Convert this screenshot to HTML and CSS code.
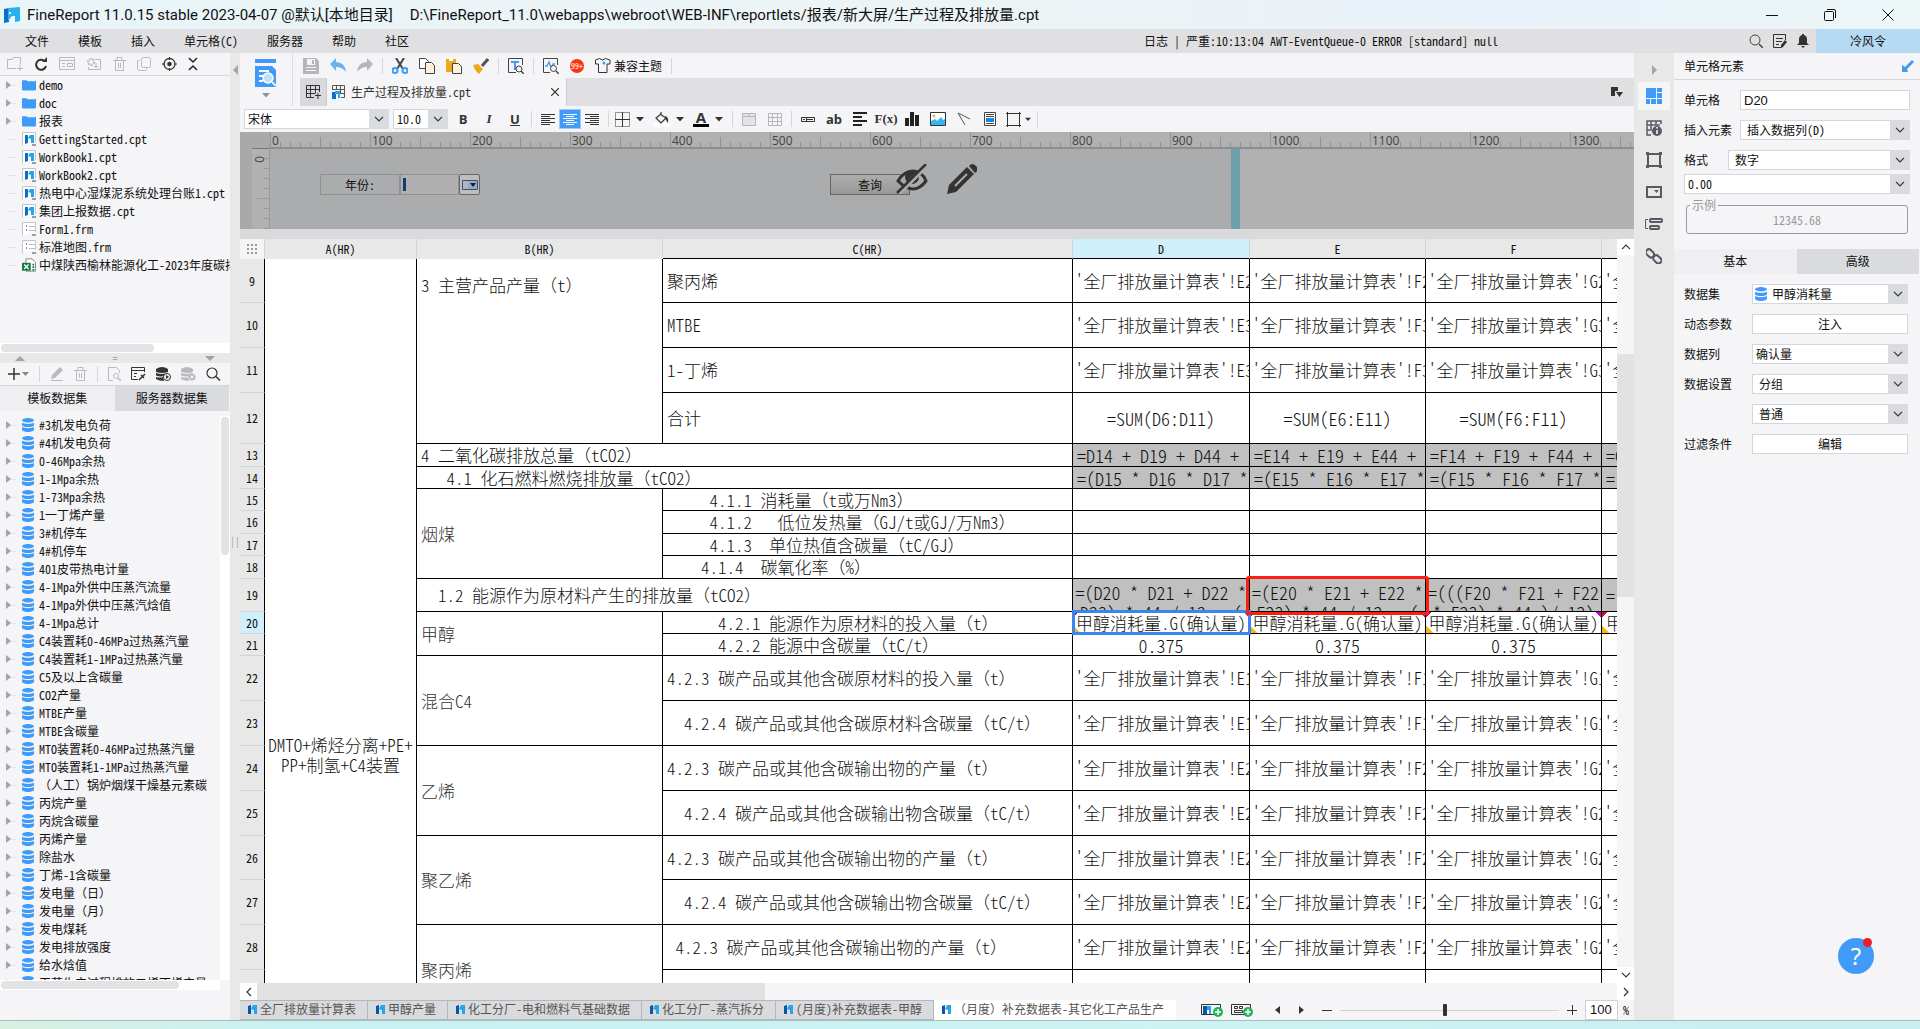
FILE: index.html
```html
<!DOCTYPE html>
<html lang="zh-CN">
<head>
<meta charset="utf-8">
<title>FineReport - 生产过程及排放量.cpt</title>
<link rel="stylesheet" href="styles.css">
</head>
<body>
<svg class="defs" aria-hidden="true">
  <symbol id="logo" viewBox="0 0 16 16"><path fill="#0b6fc9" d="M0 2l5-1v14l-5 1z"/><path fill="#27b1ee" d="M4 1l12-1v14l-5 1v-6H8l-4 5z"/><path fill="#fff" d="M5 5h2v2h-2zM9 9h1v7h-1z"/></symbol>
  <symbol id="db" viewBox="0 0 12 14"><g fill="#3f9bf7"><path d="M0 2.4C0 1 2.700 6 0s6 1 6 2.400v.6C12 4.400 9.300 5 6 5S0 4.400 0 3z"/><path d="M0 4.600C1 5.600 3.500 6 6 6s5-.4 6-1.400V7c0 1.400-2.700 2-6 2S0 8.400 0 7z"/><path d="M0 8.800C1 9.800 3.500 10.200 6 10.200s5-.4 6-1.400v2.700c0 1.500-2.700 2.500-6 2.500s-6-1-6-2.500z"/><ellipse cx="6" cy="2.200" rx="6" ry="2.200"/></g></symbol>
  <symbol id="folder" viewBox="0 0 15 12"><path fill="#3f9bf7" d="M0 1h5l1 1h8l1-1v10l-1 1H1l-1-1z"/></symbol>
  <symbol id="cpt" viewBox="0 0 14 14"><path fill="#fff" stroke="#c4c6ca" d="M.5 13.500V.5h13V10"/><path fill="#0b6fc9" d="M3 3h3v8l-3 1z"/><path fill="#27a5ea" d="M6 6l2-3h4v8H9V7z"/><path fill="#9a9da3" d="M10 12h4v2h-4z"/></symbol>
  <symbol id="frm" viewBox="0 0 14 14"><path fill="#fff" stroke="#c4c6ca" d="M.5 13.500V.5h13V10"/><path fill="#3b9be8" d="M4 3h1v2H4zM4 7h1v2H4z"/><path stroke="#b9bbc0" d="M7 4.500h6M7 8.500h6"/><path fill="#9a9da3" d="M10 12h4v2h-4z"/></symbol>
  <symbol id="xls" viewBox="0 0 16 15"><path fill="#fff" stroke="#777" d="M4.500.5h7l4 4v10h-11z"/><path fill="#107c41" d="M0 5h10v9H0z"/><path stroke="#fff" stroke-width="1.500" d="M2.500 7l5 5M7.500 7l-5 5"/><path stroke="#107c41" stroke-width="2" d="M13 6v8" stroke-dasharray="2 1"/></symbol>
  <symbol id="chev" viewBox="0 0 10 6"><path fill="none" stroke="#333" stroke-width="1.200" d="M1 .8l4 4 4-4"/></symbol>
  <symbol id="tri" viewBox="0 0 8 5"><path fill="#333" d="M0 0h8L4 4.500z"/></symbol>
  <symbol id="tab-icon" viewBox="0 0 9 9"><path fill="#0b58a8" d="M0 1l3-1v9H0z"/><path fill="#27a5ea" d="M3 4l2-4h4v9H6V5z"/></symbol>
</svg>

<header class="titlebar">
  <svg class="app-logo"><use href="#logo"/></svg>
  <span>FineReport 11.0.15 stable 2023-04-07 @默认[本地目录]</span>
  <span class="path">D:\FineReport_11.0\webapps\webroot\WEB-INF\reportlets/报表/新大屏/生产过程及排放量.cpt</span>
  <div class="window-buttons">
    <button aria-label="最小化"><svg width="12" height="12"><path stroke="#111" d="M0 6.500h12"/></svg></button>
    <button aria-label="还原"><svg width="12" height="12"><rect x=".5" y="2.500" width="9" height="9" rx="1" fill="none" stroke="#111"/><path fill="none" stroke="#111" d="M3 .5h7q1.500 0 1.500 1.500v7"/></svg></button>
    <button aria-label="关闭"><svg width="12" height="12"><path stroke="#111" d="M.5.5l11 11M11.500.5l-11 11"/></svg></button>
  </div>
</header>

<nav class="menubar">
  <button>文件</button><button>模板</button><button>插入</button><button>单元格(C)</button><button>服务器</button><button>帮助</button><button>社区</button>
  <span class="log">日志 | 严重:10:13:04 AWT-EventQueue-0 ERROR [standard] null</span>
  <div class="menu-icons">
    <button aria-label="搜索"><svg width="14" height="14"><circle cx="6" cy="6" r="5" fill="none" stroke="#444"/><path stroke="#444" stroke-width="1.500" d="M10 10l4 4"/></svg></button>
    <button aria-label="记录"><svg width="14" height="14"><path fill="none" stroke="#333" d="M8 13.500H.5V.5h12V6M3 4.500h7M3 7.500h6M3 10.500h3"/><path fill="#333" d="M12 6l2 2-4 5-2 1v-3z"/></svg></button>
    <button aria-label="通知"><svg width="12" height="14"><path fill="#333" d="M5 0h2v1q3 1 3 4v4l2 2H0l2-2V5q0-3 3-4zM4 12h4l-2 2z"/></svg></button>
  </div>
  <button class="user">冷风令</button>
</nav>

<div class="workspace">
  <aside class="left">
    <div class="toolbar">
      <button aria-label="新建文件夹"><svg width="16" height="14"><path fill="none" stroke="#b9babd" d="M9 11.500H.5v-9h5l1-2h7v7M10 11.500h6M13 8v6"/></svg></button>
      <button aria-label="刷新"><svg width="14" height="14"><path fill="none" stroke="#333" stroke-width="2" d="M10.500 4A5 5 0 1 0 12 9"/><path fill="#333" d="M8 5h5V0z"/></svg></button>
      <button aria-label="重命名"><svg width="16" height="14"><path fill="none" stroke="#b9babd" d="M.5.500h15v12H.5zM.5 3.500h15M3 6.500h3M3 9.500h3M8.500 6.500h5v3h-5z"/></svg></button>
      <button aria-label="设置"><svg width="16" height="14"><circle cx="5" cy="5" r="3" fill="none" stroke="#b9babd" stroke-width="2" stroke-dasharray="2 1"/><path fill="none" stroke="#b9babd" d="M9 2.500h5.500v10h-12V10M8 9.500h4M10 6v5"/></svg></button>
      <button aria-label="删除"><svg width="13" height="14"><path fill="none" stroke="#b9babd" d="M0 3.500h13M4 3V.5h5V3M2.500 3.500v10h8v-10M5.500 6v5M7.500 6v5"/></svg></button>
      <button aria-label="复制"><svg width="14" height="14"><rect x="4.500" y=".5" width="9" height="10" rx="2" fill="none" stroke="#b9babd"/><path fill="none" stroke="#b9babd" d="M2.500 3.500h-2v8q0 2 2 2h6q1 0 1-2"/></svg></button>
      <button aria-label="定位"><svg width="15" height="14"><circle cx="7.500" cy="7" r="5.500" fill="none" stroke="#333" stroke-width="1.300"/><circle cx="7.500" cy="7" r="2.300" fill="#333"/><path stroke="#333" d="M7.500 0v3M7.500 11v3M0 7h3M12 7h3"/></svg></button>
      <button aria-label="收起"><svg width="10" height="14"><path fill="none" stroke="#222" stroke-width="1.500" d="M1 1l4 4 4-4M1 13l4-4 4 4"/></svg></button>
    </div>
    <ul class="tree files">
      <li class="open"><svg><use href="#folder"/></svg>demo</li>
      <li class="open"><svg><use href="#folder"/></svg>doc</li>
      <li class="open"><svg><use href="#folder"/></svg>报表</li>
      <li><svg><use href="#cpt"/></svg>GettingStarted.cpt</li>
      <li><svg><use href="#cpt"/></svg>WorkBook1.cpt</li>
      <li><svg><use href="#cpt"/></svg>WorkBook2.cpt</li>
      <li><svg><use href="#cpt"/></svg>热电中心湿煤泥系统处理台账1.cpt</li>
      <li><svg><use href="#cpt"/></svg>集团上报数据.cpt</li>
      <li><svg><use href="#frm"/></svg>Form1.frm</li>
      <li><svg><use href="#frm"/></svg>标准地图.frm</li>
      <li><svg><use href="#xls"/></svg>中煤陕西榆林能源化工-2023年度碳排放</li>
    </ul>
    <div class="hbar"><span class="thumb-files"></span></div>
    <div class="splitter-row"><i class="up"></i><span>=</span><i class="down"></i></div>
    <div class="toolbar data-tools">
      <button aria-label="新增"><svg width="21" height="12"><path stroke="#333" stroke-width="1.500" d="M0 6h12M6 0v12"/><path fill="#888" d="M14 4h7l-3.500 4z"/></svg></button>
      <i class="sep"></i>
      <button aria-label="编辑"><svg width="14" height="14"><path fill="#b9babd" d="M10 0l3 3-8 8-4 1 1-4zM1 13h12v1H1z"/></svg></button>
      <button aria-label="删除数据集"><svg width="13" height="14"><path fill="none" stroke="#b9babd" d="M0 3.500h13M4 3V.5h5V3M2.500 3.500v10h8v-10M5.500 6v5M7.500 6v5"/></svg></button>
      <i class="sep"></i>
      <button aria-label="预览"><svg width="13" height="14"><path fill="none" stroke="#b9babd" d="M5 13.500H.5V.5h8l3 3V6"/><circle cx="8" cy="9" r="2.500" fill="none" stroke="#b9babd"/><path stroke="#b9babd" stroke-width="1.500" d="M10 11l3 3"/></svg></button>
      <button aria-label="连接"><svg width="15" height="14"><path fill="none" stroke="#333" d="M7 12.500H.5V.5h13V5M.5 3.500h13M3 6.500h3M3 9.500h2"/><path fill="none" stroke="#333" stroke-width="1.500" d="M8 13l3-3M10 8l3 3M12 9l2-2"/></svg></button>
      <button aria-label="数据源"><svg width="15" height="14"><path fill="#333" d="M0 2q6-4 12 0v3q-6 2-12 0zM0 6q6 2 11 0v1l-3 2q-4 1-8-.5zM0 10q4 1 7 0l1 4q-5 0-8-2z"/><circle cx="11" cy="10" r="3.500" fill="#f5f5f7" stroke="#333"/><path fill="#333" d="M10 8l3 2-3 2z"/></svg></button>
      <button aria-label="移除数据源"><svg width="15" height="14"><path fill="#b9babd" d="M0 2q6-4 12 0v3q-6 2-12 0zM0 6q6 2 11 0v1l-3 2q-4 1-8-.5zM0 10q4 1 7 0l1 4q-5 0-8-2z"/><circle cx="11" cy="10" r="3.500" fill="#b9babd"/><path stroke="#fff" d="M9.500 8.500l3 3M12.500 8.500l-3 3"/></svg></button>
      <button aria-label="查找"><svg width="15" height="14"><circle cx="6" cy="6" r="5" fill="none" stroke="#333" stroke-width="1.200"/><path stroke="#333" stroke-width="1.500" d="M10 9.500l4 4"/></svg></button>
    </div>
    <div class="tabs left-tabs"><button class="on">模板数据集</button><button>服务器数据集</button></div>
    <div class="data-area">
      <ul class="tree data">
        <li class="open"><svg><use href="#db"/></svg>#3机发电负荷</li>
        <li class="open"><svg><use href="#db"/></svg>#4机发电负荷</li>
        <li class="open"><svg><use href="#db"/></svg>0-46Mpa余热</li>
        <li class="open"><svg><use href="#db"/></svg>1-1Mpa余热</li>
        <li class="open"><svg><use href="#db"/></svg>1-73Mpa余热</li>
        <li class="open"><svg><use href="#db"/></svg>1一丁烯产量</li>
        <li class="open"><svg><use href="#db"/></svg>3#机停车</li>
        <li class="open"><svg><use href="#db"/></svg>4#机停车</li>
        <li class="open"><svg><use href="#db"/></svg>401皮带热电计量</li>
        <li class="open"><svg><use href="#db"/></svg>4-1Mpa外供中压蒸汽流量</li>
        <li class="open"><svg><use href="#db"/></svg>4-1Mpa外供中压蒸汽焓值</li>
        <li class="open"><svg><use href="#db"/></svg>4-1Mpa总计</li>
        <li class="open"><svg><use href="#db"/></svg>C4装置耗0-46MPa过热蒸汽量</li>
        <li class="open"><svg><use href="#db"/></svg>C4装置耗1-1MPa过热蒸汽量</li>
        <li class="open"><svg><use href="#db"/></svg>C5及以上含碳量</li>
        <li class="open"><svg><use href="#db"/></svg>CO2产量</li>
        <li class="open"><svg><use href="#db"/></svg>MTBE产量</li>
        <li class="open"><svg><use href="#db"/></svg>MTBE含碳量</li>
        <li class="open"><svg><use href="#db"/></svg>MTO装置耗0-46MPa过热蒸汽量</li>
        <li class="open"><svg><use href="#db"/></svg>MTO装置耗1-1MPa过热蒸汽量</li>
        <li class="open fw"><svg><use href="#db"/></svg>（人工）锅炉烟煤干燥基元素碳</li>
        <li class="open"><svg><use href="#db"/></svg>丙烷产量</li>
        <li class="open"><svg><use href="#db"/></svg>丙烷含碳量</li>
        <li class="open"><svg><use href="#db"/></svg>丙烯产量</li>
        <li class="open"><svg><use href="#db"/></svg>除盐水</li>
        <li class="open"><svg><use href="#db"/></svg>丁烯-1含碳量</li>
        <li class="open fw"><svg><use href="#db"/></svg>发电量（日）</li>
        <li class="open fw"><svg><use href="#db"/></svg>发电量（月）</li>
        <li class="open"><svg><use href="#db"/></svg>发电煤耗</li>
        <li class="open"><svg><use href="#db"/></svg>发电排放强度</li>
        <li class="open"><svg><use href="#db"/></svg>给水焓值</li>
        <li class="open"><svg><use href="#db"/></svg>工艺生产过程排放二烯丁烯产量</li>
      </ul>
      <div class="vbar"><span></span></div>
    </div>
    <div class="hbar data-hbar"><span class="thumb-data"></span></div>
  </aside>

  <div class="gutter"><i></i><b>||</b></div>

  <main class="main">
    <div class="top">
      <button class="preview" aria-label="预览模板">
        <svg width="22" height="28"><path fill="#3f9bf7" d="M0 0h21v4H0zM0 7h17l4 4v17H0z"/><path stroke="#fff" stroke-width="2" d="M4 12h10M4 17h5M4 22h4"/><circle cx="13" cy="19" r="5" fill="#bfe0fb" stroke="#fff" stroke-width="1.500"/><path stroke="#eee" stroke-width="2" d="M17 23l4 4"/></svg>
        <svg width="8" height="5" class="dim"><use href="#tri"/></svg>
      </button>
      <div class="top-rows">
        <div class="iconbar">
          <button aria-label="保存"><svg width="16" height="16"><path fill="#b5b6b9" d="M0 0h13l3 3v13H0z"/><path fill="#f5f5f7" d="M4 1h8v6H4zM3 9h10v1H3zM3 12h10v1H3z"/><path fill="#b5b6b9" d="M9 2h2v4H9z"/></svg></button>
          <button aria-label="撤销"><svg width="16" height="15"><path fill="#6cb2f3" d="M6 0v4q9 0 10 10-4-5-10-5v4L0 6z"/></svg></button>
          <button aria-label="重做"><svg width="16" height="15"><path fill="#b5b6b9" d="M10 0v4Q1 4 0 14q4-5 10-5v4l6-7z"/></svg></button>
          <i class="sep"></i>
          <button aria-label="剪切"><svg width="16" height="16"><path stroke="#444" stroke-width="2" d="M4 0l7 11M12 0L5 11"/><circle cx="3" cy="12.500" r="2.500" fill="none" stroke="#3f9bf7" stroke-width="2"/><circle cx="13" cy="12.500" r="2.500" fill="none" stroke="#3f9bf7" stroke-width="2"/></svg></button>
          <button aria-label="复制单元格"><svg width="16" height="16"><path fill="#fff" stroke="#444" d="M.5.500h6l3 3v7h-9z"/><path fill="#fdf3dd" stroke="#444" d="M6.500 4.500h6l3 3v8h-9z"/></svg></button>
          <button aria-label="粘贴"><svg width="16" height="16"><path fill="#f0a818" d="M0 1h10v13H0z"/><path fill="#fff" d="M3 0h4v3H3z"/><path fill="#fdf3dd" stroke="#444" d="M6.500 5.500h6l3 3v7h-9z"/></svg></button>
          <button aria-label="格式刷"><svg width="16" height="16"><path fill="#f0a818" d="M0 7l5-1 5 5-4 5q-4-3-6-9z"/><path stroke="#555" stroke-width="3" d="M9 8l6-7"/></svg></button>
          <i class="sep"></i>
          <button aria-label="文本预览"><svg width="16" height="16"><path fill="none" stroke="#444" d="M8 14.500H.5V.5h14V7"/><path fill="#3f9bf7" d="M3 3h8v2H8v7H6V5H3z"/><circle cx="11" cy="11" r="3" fill="#f5f5f7" stroke="#444"/><path stroke="#444" stroke-width="1.500" d="M13 13l3 3"/></svg></button>
          <i class="sep"></i>
          <button aria-label="性能分析"><svg width="16" height="16"><path fill="none" stroke="#444" d="M7 14.500H.5V.5h14V7"/><path fill="none" stroke="#3f9bf7" stroke-width="1.300" d="M2 8h2l2-4 2 6 2-4h2"/><circle cx="10.500" cy="10.500" r="3" fill="#f5f5f7" stroke="#444"/><path stroke="#444" stroke-width="1.500" d="M13 13l3 3"/></svg></button>
          <button class="badge">99+</button>
          <button class="theme"><svg width="16" height="15"><path fill="none" stroke="#333" d="M.5 2l4-1.500q3 3 6 0L15 2v4h-3v8.500H3.500V6h-3z"/><circle cx="9" cy="5" r="1.500" fill="#3f9bf7"/></svg>兼容主题</button>
          <i class="sep"></i>
        </div>
        <div class="filetabs">
          <button class="new-tab" aria-label="新建"><svg width="15" height="14"><path fill="none" stroke="#333" d="M8 12.500H.5V.5h13V7M.5 4.500h13M.5 8.500H9M4.500.5v12M9.500.5v8M9 10.500h6M12 8v6"/></svg></button>
          <div class="file-tab"><svg width="13" height="14"><path fill="none" stroke="#555" d="M.5 4V.5h12v12H9M0 4.500h12M8 8.500h5M4.500 0v4M8.500 0v8"/><path fill="#0b6fc9" d="M0 7h4v7H0z"/><path fill="#27a5ea" d="M3 6h5v7H6V9H3z"/></svg><span>生产过程及排放量.cpt</span><button aria-label="关闭标签"><svg width="8" height="8"><path stroke="#333" stroke-width="1.200" d="M0 0l8 8M8 0L0 8"/></svg></button></div>
          <button class="list-tabs" aria-label="标签列表"><svg width="12" height="10"><path fill="#333" d="M0 0h7v4H4v5H0zM5 5h7l-3.500 5z"/></svg></button>
        </div>
      </div>
    </div>
    <div class="formatbar">
      <span class="combo font"><select aria-label="字体"><option>宋体</option></select><i><svg><use href="#chev"/></svg></i></span>
      <span class="combo size"><select aria-label="字号"><option>10.0</option></select><i><svg><use href="#chev"/></svg></i></span>
      <button class="fmt b">B</button><button class="fmt i">I</button><button class="fmt u">U</button>
      <i class="sep"></i>
      <button class="fmt al" aria-label="左对齐"><svg width="14" height="13"><path stroke="#333" d="M0 1.500h14M0 3.500h9M0 5.500h14M0 7.500h9M0 9.500h14M0 11.500h9"/></svg></button>
      <button class="fmt sel" aria-label="居中"><svg width="14" height="13"><path stroke="#fff" d="M0 1.500h14M3 3.500h8M0 5.500h14M3 7.500h8M0 9.500h14M3 11.500h8"/></svg></button>
      <button class="fmt ar" aria-label="右对齐"><svg width="14" height="13"><path stroke="#333" d="M0 1.500h14M5 3.500h9M0 5.500h14M5 7.500h9M0 9.500h14M5 11.500h9"/></svg></button>
      <i class="sep"></i>
      <button class="fmt drop" aria-label="边框"><svg width="15" height="15"><path fill="none" stroke="#333" stroke-dasharray="1 1" d="M.5.500h14v14H.5z"/><path stroke="#333" d="M7.500 0v15M0 7.500h15"/></svg><svg width="8" height="5"><use href="#tri"/></svg></button>
      <button class="fmt drop" aria-label="填充"><svg width="16" height="16"><path fill="#fff" d="M0 12h16v4H0z"/><path fill="none" stroke="#333" stroke-width="1.200" d="M6 3l6 4-5 5-5-5 5-4V1"/><path fill="#333" d="M11 5q4 1 3 7l-2-3z"/></svg><svg width="8" height="5"><use href="#tri"/></svg></button>
      <button class="fmt drop" aria-label="字体颜色"><span class="color-a">A</span><svg width="8" height="5"><use href="#tri"/></svg></button>
      <i class="sep"></i>
      <button class="fmt" aria-label="合并单元格"><svg width="14" height="13"><path fill="#e4e4e6" stroke="#b5b6b9" d="M.5.500h13v12H.5zM0 3.500h14M7 0v3"/></svg></button>
      <button class="fmt" aria-label="拆分单元格"><svg width="14" height="13"><path fill="none" stroke="#b5b6b9" d="M.5.500h13v12H.5zM0 4.500h14M0 8.500h14M4.500 0v13M9.500 0v13"/></svg></button>
      <i class="sep"></i>
      <button class="fmt" aria-label="控件"><svg width="14" height="5"><path fill="none" stroke="#333" d="M.5.500h13v4H.5zM2 2.500h2M6 2.500h6M5.500 0v5"/></svg></button>
      <button class="fmt ab">ab</button>
      <button class="fmt" aria-label="富文本"><svg width="14" height="14"><path stroke="#222" stroke-width="2" d="M0 1h14M0 5h9M0 9h14M0 13h9"/></svg></button>
      <button class="fmt fx">F(x)</button>
      <button class="fmt" aria-label="图表"><svg width="14" height="14"><path fill="#222" d="M0 6h4v8H0zM5 0h4v14H5zM10 3h4v11h-4z"/></svg></button>
      <button class="fmt" aria-label="图片"><svg width="16" height="14"><path fill="#fff" stroke="#333" d="M.5.500h15v13H.5z"/><circle cx="4" cy="4" r="1.500" fill="#f5b83d"/><path fill="#35b4f2" d="M1 13V9l4-2 2 2 4-4 2 3 2-1v6z"/></svg></button>
      <button class="fmt" aria-label="斜线"><svg width="14" height="14"><path fill="none" stroke="#555" d="M8 13L1 1l12 6"/></svg></button>
      <button class="fmt" aria-label="子报表"><svg width="12" height="14"><path fill="#fff" stroke="#444" d="M.5.500h11v13H.5z"/><path stroke="#444" d="M2 2.500h8M2 4.500h8M2 11.500h8"/><path fill="#1c87e0" d="M2 6h8v4H2z"/></svg></button>
      <button class="fmt drop tight" aria-label="形状"><svg width="15" height="15"><path fill="none" stroke="#333" d="M1.500 0v15M13.500 0v15M0 1.500h15M0 13.500h15"/></svg><svg width="6" height="5"><use href="#tri"/></svg></button>
      <i class="sep"></i>
    </div>

    <section class="param">
      <div class="v-ruler"><span>0</span></div>
      <div class="param-main">
        <div class="h-ruler"><span>0</span><span>100</span><span>200</span><span>300</span><span>400</span><span>500</span><span>600</span><span>700</span><span>800</span><span>900</span><span>1000</span><span>1100</span><span>1200</span><span>1300</span></div>
        <div class="canvas">
          <div class="board">
            <label class="w-label" for="year">年份:</label>
            <input class="w-input" id="year" type="text">
            <button class="w-drop" aria-label="下拉"><svg width="16" height="10"><path fill="#9aa7c4" stroke="#35517f" d="M.5.500h15v9H.5z"/><path fill="#b4b4b4" d="M1 1h5v8H1z"/><path fill="#123" d="M8 3h6l-3 4z"/></svg></button>
            <button class="w-query">查询</button>
            <svg class="eye" width="32" height="30"><path fill="none" stroke="#333" stroke-width="3" d="M2 17Q8 7 17 7t13 10Q24 25 17 25T2 17z"/><circle cx="16" cy="13" r="7" fill="#333"/><path stroke="#abacae" stroke-width="5" d="M2 30L31 1"/><path stroke="#333" stroke-width="2.500" d="M1 29L30 0"/></svg>
            <svg class="pencil" width="30" height="30"><path fill="#333" d="M0 30l2-9L20 3l7 7L9 28zM22 2q3-4 7 0t-1 7z"/><path stroke="#abacae" stroke-width="2" d="M8 22L20 10"/></svg>
          </div>
          <div class="handle"></div>
        </div>
      </div>
    </section>

    <section class="sheet">
      <div class="grid">
        <table>
          <colgroup><col class="c0"><col class="cA"><col class="cB"><col class="cC"><col class="cD"><col class="cE"><col class="cE"><col class="cE"></colgroup>
          <thead>
            <tr><th class="corner"><svg width="12" height="10"><path stroke="#999" stroke-width="2" stroke-dasharray="2 2" d="M1 1h11M1 5h11M1 9h11"/></svg></th><th>A(HR)</th><th>B(HR)</th><th class="ln">C(HR)</th><th class="ln cur">D</th><th class="ln">E</th><th class="ln">F</th><th class="ln"></th></tr>
          </thead>
          <tbody>
            <tr class="r44"><th>9</th><td rowspan="21" class="unit">DMTO+烯烃分离+PE+<br>PP+制氢+C4装置</td><td rowspan="4" class="first">3 主营产品产量<span class="fw">（</span>t<span class="fw">）</span></td><td>聚丙烯</td><td class="ref">'全厂排放量计算表'!E2</td><td class="ref">'全厂排放量计算表'!F2</td><td class="ref">'全厂排放量计算表'!G2</td><td class="ref">'全</td></tr>
            <tr class="r45"><th>10</th><td>MTBE</td><td class="ref">'全厂排放量计算表'!E3</td><td class="ref">'全厂排放量计算表'!F3</td><td class="ref">'全厂排放量计算表'!G3</td><td class="ref">'全</td></tr>
            <tr class="r45"><th>11</th><td>1-丁烯</td><td class="ref">'全厂排放量计算表'!E3</td><td class="ref">'全厂排放量计算表'!F3</td><td class="ref">'全厂排放量计算表'!G3</td><td class="ref">'全</td></tr>
            <tr class="r51"><th>12</th><td>合计</td><td class="fm mid">=SUM(D6:D11)</td><td class="fm mid">=SUM(E6:E11)</td><td class="fm mid">=SUM(F6:F11)</td><td></td></tr>
            <tr class="r23"><th>13</th><td colspan="2">4 二氧化碳排放总量<span class="fw">（</span>tCO2<span class="fw">）</span></td><td class="fm gray">=D14 + D19 + D44 +</td><td class="fm gray">=E14 + E19 + E44 +</td><td class="fm gray">=F14 + F19 + F44 +</td><td class="fm gray">=G</td></tr>
            <tr class="r22"><th>14</th><td colspan="2">   4.1 化石燃料燃烧排放量<span class="fw">（</span>tCO2<span class="fw">）</span></td><td class="fm gray">=(D15 * D16 * D17 *</td><td class="fm gray">=(E15 * E16 * E17 *</td><td class="fm gray">=(F15 * F16 * F17 *</td><td class="fm gray">=(</td></tr>
            <tr class="r22"><th>15</th><td rowspan="4" class="name">烟煤</td><td>     4.1.1 消耗量<span class="fw">（</span>t或万Nm3<span class="fw">）</span></td><td></td><td></td><td></td><td></td></tr>
            <tr class="r23"><th>16</th><td>     4.1.2   低位发热量<span class="fw">（</span>GJ/t或GJ/万Nm3<span class="fw">）</span></td><td></td><td></td><td></td><td></td></tr>
            <tr class="r22"><th>17</th><td>     4.1.3  单位热值含碳量<span class="fw">（</span>tC/GJ<span class="fw">）</span></td><td></td><td></td><td></td><td></td></tr>
            <tr class="r23"><th>18</th><td>    4.1.4  碳氧化率<span class="fw">（</span>%<span class="fw">）</span></td><td></td><td></td><td></td><td></td></tr>
            <tr class="r33"><th>19</th><td colspan="2">  1.2 能源作为原材料产生的排放量<span class="fw">（</span>tCO2<span class="fw">）</span></td><td class="fm gray two"><div>=(D20 * D21 + D22 *
D23) * 44 / 12 - (</div></td><td class="fm gray two marked"><div>=(E20 * E21 + E22 *
E23) * 44 / 12 - (</div></td><td class="fm gray two"><div>=(((F20 * F21 + F22
* F23) * 44 )/ 12)</div></td><td class="fm gray">=(</td></tr>
            <tr class="r22"><th class="cur">20</th><td rowspan="2" class="name">甲醇</td><td>      4.2.1 能源作为原材料的投入量<span class="fw">（</span>t<span class="fw">）</span></td><td class="ds active">甲醇消耗量.G(确认量)</td><td class="ds">甲醇消耗量.G(确认量)</td><td class="ds">甲醇消耗量.G(确认量)</td><td class="ds cut">甲</td></tr>
            <tr class="r22"><th>21</th><td>      4.2.2 能源中含碳量<span class="fw">（</span>tC/t<span class="fw">）</span></td><td class="fm mid">0.375</td><td class="fm mid">0.375</td><td class="fm mid">0.375</td><td></td></tr>
            <tr class="r45"><th>22</th><td rowspan="2" class="name">混合C4</td><td>4.2.3 碳产品或其他含碳原材料的投入量<span class="fw">（</span>t<span class="fw">）</span></td><td class="ref">'全厂排放量计算表'!E1</td><td class="ref">'全厂排放量计算表'!F1</td><td class="ref">'全厂排放量计算表'!G1</td><td class="ref">'全</td></tr>
            <tr class="r45"><th>23</th><td>  4.2.4 碳产品或其他含碳原材料含碳量<span class="fw">（</span>tC/t<span class="fw">）</span></td><td class="ref">'全厂排放量计算表'!E1</td><td class="ref">'全厂排放量计算表'!F1</td><td class="ref">'全厂排放量计算表'!G1</td><td class="ref">'全</td></tr>
            <tr class="r45"><th>24</th><td rowspan="2" class="name">乙烯</td><td>4.2.3 碳产品或其他含碳输出物的产量<span class="fw">（</span>t<span class="fw">）</span></td><td class="ref">'全厂排放量计算表'!E2</td><td class="ref">'全厂排放量计算表'!F2</td><td class="ref">'全厂排放量计算表'!G2</td><td class="ref">'全</td></tr>
            <tr class="r45"><th>25</th><td>  4.2.4 碳产品或其他含碳输出物含碳量<span class="fw">（</span>tC/t<span class="fw">）</span></td><td class="ref">'全厂排放量计算表'!E2</td><td class="ref">'全厂排放量计算表'!F2</td><td class="ref">'全厂排放量计算表'!G2</td><td class="ref">'全</td></tr>
            <tr class="r44"><th>26</th><td rowspan="2" class="name">聚乙烯</td><td>4.2.3 碳产品或其他含碳输出物的产量<span class="fw">（</span>t<span class="fw">）</span></td><td class="ref">'全厂排放量计算表'!E2</td><td class="ref">'全厂排放量计算表'!F2</td><td class="ref">'全厂排放量计算表'!G2</td><td class="ref">'全</td></tr>
            <tr class="r45"><th>27</th><td>  4.2.4 碳产品或其他含碳输出物含碳量<span class="fw">（</span>tC/t<span class="fw">）</span></td><td class="ref">'全厂排放量计算表'!E2</td><td class="ref">'全厂排放量计算表'!F2</td><td class="ref">'全厂排放量计算表'!G2</td><td class="ref">'全</td></tr>
            <tr class="r45"><th>28</th><td rowspan="2" class="name">聚丙烯</td><td> 4.2.3 碳产品或其他含碳输出物的产量<span class="fw">（</span>t<span class="fw">）</span></td><td class="ref">'全厂排放量计算表'!E2</td><td class="ref">'全厂排放量计算表'!F2</td><td class="ref">'全厂排放量计算表'!G2</td><td class="ref">'全</td></tr>
            <tr class="r45"><th></th><td></td><td></td><td></td><td></td><td></td></tr>
          </tbody>
        </table>
      </div>
      <div class="sheet-v"><button aria-label="上"><svg width="10" height="6" class="flip"><use href="#chev"/></svg></button><span></span><button aria-label="下"><svg width="10" height="6"><use href="#chev"/></svg></button></div>
    </section>
    <div class="sheet-h"><button aria-label="左"><svg width="6" height="10"><path fill="none" stroke="#333" stroke-width="1.200" d="M5 1L1 5l4 4"/></svg></button><span></span><button aria-label="右"><svg width="6" height="10"><path fill="none" stroke="#333" stroke-width="1.200" d="M1 1l4 4-4 4"/></svg></button></div>
    <footer class="sheettabs">
      <button><svg><use href="#tab-icon"/></svg>全厂排放量计算表</button>
      <button><svg><use href="#tab-icon"/></svg>甲醇产量</button>
      <button><svg><use href="#tab-icon"/></svg>化工分厂-电和燃料气基础数据</button>
      <button><svg><use href="#tab-icon"/></svg>化工分厂-蒸汽拆分</button>
      <button><svg><use href="#tab-icon"/></svg>(月度)补充数据表-甲醇</button>
      <button class="on"><svg><use href="#tab-icon"/></svg><span class="fw">（月度）补充数据表</span>-其它化工产品生产</button>
      <div class="foot-tools">
        <button aria-label="新增报表"><svg width="22" height="14"><path fill="none" stroke="#333" d="M.5 1.500h19v10H.5z"/><path fill="#0b58a8" d="M2 3h4v8H2z"/><path fill="#27a5ea" d="M6 3h4v8H8V7H6z"/><circle cx="17" cy="9" r="5" fill="#23b35b"/><path stroke="#fff" stroke-width="1.500" d="M14 9h6M17 6v6"/></svg></button>
        <button aria-label="新增聚合"><svg width="22" height="14"><path fill="none" stroke="#333" d="M.5 1.500h19v10H.5zM3.500 3.500h3v2h-3zM8.500 3.500h3v2h-3zM3.500 7.500h8v2h-8z"/><circle cx="17" cy="9" r="5" fill="#23b35b"/><path stroke="#fff" stroke-width="1.500" d="M14 9h6M17 6v6"/></svg></button>
      </div>
      <div class="pager">
        <button aria-label="前一页"><svg width="5" height="8"><path fill="#333" d="M5 0v8L0 4z"/></svg></button>
        <button aria-label="后一页"><svg width="5" height="8"><path fill="#333" d="M0 0v8l5-4z"/></svg></button>
      </div>
      <div class="zoomer">
        <button aria-label="缩小"><svg width="10" height="10"><path stroke="#333" d="M0 5.500h10"/></svg></button>
        <input type="range" min="0" max="100" value="48" aria-label="缩放">
        <button aria-label="放大"><svg width="10" height="10"><path stroke="#333" d="M0 5.500h10M5.500 0v10"/></svg></button>
      </div>
      <input class="pct" type="text" value="100" aria-label="缩放比例"><span class="pct-sign">%</span>
    </footer>
  </main>

  <nav class="strip">
    <i class="fold"></i>
    <button class="on" aria-label="单元格元素"><svg width="16" height="16"><path fill="#3f9bf7" d="M0 0h10v10H0zM11 0h5v4h-5zM11 5h5v5h-5zM0 11h4v5H0zM5 11h5v5H5zM11 11h5v5h-5z"/></svg></button>
    <button aria-label="单元格属性"><svg width="16" height="16"><path fill="none" stroke="#555a63" stroke-width="1.500" d="M5 15H1V1h14v3M1 5h13M1 10h5M5 1v8M10 1v4"/><circle cx="11" cy="11" r="5" fill="#555a63"/><path stroke="#fff" stroke-width="1.500" d="M11 10v4M11 7v1.500"/></svg></button>
    <button aria-label="悬浮元素"><svg width="16" height="16"><path fill="none" stroke="#555a63" stroke-width="2" d="M2 2h12v12H2z"/><path fill="#555a63" d="M0 0h3v3H0zM13 0h3v3h-3zM0 13h3v3H0zM13 13h3v3h-3z"/></svg></button>
    <button aria-label="控件设置"><svg width="16" height="12"><path fill="none" stroke="#555a63" stroke-width="2" d="M1 1h14v10H1z"/><path fill="#555a63" d="M8 4h5l-2.500 3z"/></svg></button>
    <button aria-label="条件属性"><svg width="18" height="12"><path fill="none" stroke="#555a63" d="M3 1.500H.5v9H3"/><rect x="5" y="1" width="12" height="3" rx="1" fill="none" stroke="#555a63" stroke-width="2"/><rect x="5" y="8" width="9" height="3" rx="1" fill="none" stroke="#555a63" stroke-width="2"/></svg></button>
    <button aria-label="超级链接"><svg width="16" height="16"><g fill="none" stroke="#555a63" stroke-width="2"><rect x="0" y="3" width="9" height="6" rx="3" transform="rotate(45 5 5)"/><rect x="7" y="8" width="9" height="6" rx="3" transform="rotate(45 11 11)"/></g></svg></button>
  </nav>

  <aside class="right">
    <h2>单元格元素<svg width="12" height="12"><path fill="#3f9bf7" d="M10 0l2 2-7 7 1 3H0V5l3 2z"/></svg></h2>
    <div class="form">
      <div class="row"><label class="l56" for="cell">单元格</label><input id="cell" class="field" type="text" value="D20"></div>
      <div class="row"><label class="l56" for="ins">插入元素</label><span class="combo"><select id="ins"><option>插入数据列(D)</option></select><i><svg><use href="#chev"/></svg></i></span></div>
      <div class="row close"><label class="l44" for="fmt">格式</label><span class="combo"><select id="fmt"><option>数字</option></select><i><svg><use href="#chev"/></svg></i></span></div>
      <span class="combo near"><select aria-label="数字格式"><option>0.00</option></select><i><svg><use href="#chev"/></svg></i></span>
      <fieldset><legend>示例</legend>12345.68</fieldset>
    </div>
    <div class="tabs"><button class="on">基本</button><button>高级</button></div>
    <div class="form attrs">
      <div class="row"><label class="l68" for="dset">数据集</label><span class="combo with-icon"><svg class="lead"><use href="#db"/></svg><select id="dset"><option>甲醇消耗量</option></select><i><svg><use href="#chev"/></svg></i></span></div>
      <div class="row"><span class="l68">动态参数</span><button class="field">注入</button></div>
      <div class="row"><label class="l68" for="dcol">数据列</label><span class="combo near"><select id="dcol"><option>确认量</option></select><i><svg><use href="#chev"/></svg></i></span></div>
      <div class="row"><label class="l68" for="dmode">数据设置</label><span class="combo"><select id="dmode"><option>分组</option></select><i><svg><use href="#chev"/></svg></i></span></div>
      <div class="row"><span class="l68"></span><span class="combo"><select aria-label="分组方式"><option>普通</option></select><i><svg><use href="#chev"/></svg></i></span></div>
      <div class="row"><span class="l68">过滤条件</span><button class="field">编辑</button></div>
    </div>
    <button class="help">?<i></i></button>
  </aside>
</div>
<div class="desktop-edge"></div>
</body>
</html>
```

FILE: styles.css
```css
* { box-sizing: border-box; }
body {
  margin: 0;
  height: 100vh;
  display: flex;
  flex-direction: column;
  overflow: hidden;
  background: #f5f5f7;
  color: #111;
  font: 12px/18px "Noto Sans CJK SC", sans-serif;
  font-feature-settings: "hwid";
}
button, input, select { font: inherit; font-feature-settings: inherit; color: inherit; margin: 0; }
button { border: 0; padding: 0; background: none; display: flex; align-items: center; justify-content: center; white-space: nowrap; }
svg { display: block; flex: none; }
i, b { font-style: normal; font-weight: normal; }
.defs { position: absolute; width: 0; height: 0; }
.sep { width: 1px; height: 16px; background: #d5d6d9; flex: none; }
/* brackets that keep their full em width */
.fw { font-feature-settings: normal; }

/* title and menu */
.titlebar {
  flex: none;
  height: 29px;
  display: flex;
  align-items: center;
  padding-left: 4px;
  background: linear-gradient(90deg, #e9f5f9, #edf4f5 50%, #e9f1fa 78%, #ecf6f7);
  font: 15px/28px Roboto, "Noto Sans CJK SC", sans-serif;
  font-feature-settings: normal;
  white-space: nowrap;
}
.app-logo { width: 16px; height: 16px; margin-right: 7px; }
.path { margin-left: 17px; }
.window-buttons { display: flex; margin: 0 3px 0 auto; }
.window-buttons button { width: 58px; height: 29px; }
.menubar {
  flex: none;
  height: 24px;
  display: flex;
  align-items: center;
  gap: 29px;
  padding-left: 25px;
  background: #e0e0e2;
}
.log { margin-left: auto; white-space: pre; }
.menu-icons { display: flex; gap: 10px; margin-left: 222px; }
.menubar .user { width: 104px; height: 24px; background: #b6daf3; margin-left: -22px; }

.workspace { flex: 1; min-height: 0; display: flex; }

/* left column */
.left { width: 230px; flex: none; display: flex; flex-direction: column; }
.toolbar {
  height: 23px;
  flex: none;
  display: flex;
  align-items: center;
  gap: 11px;
  padding-left: 7px;
  border-bottom: 1px solid #d5d6d9;
}
.data-tools { gap: 10px; padding-left: 8px; }
.tree { list-style: none; margin: 0; padding: 0; overflow: hidden; white-space: nowrap; }
.tree li { position: relative; display: flex; align-items: center; height: 18px; padding-left: 39px; }
.tree li::after { content: ""; position: absolute; left: 7px; top: 9px; width: 9px; height: 1px; background: #e4e4e8; z-index: -1; }
.tree li.open::before { content: ""; position: absolute; left: 6px; top: 5px; border: 4px solid transparent; border-left: 5px solid #a3a4a7; border-right: 0; }
.tree li svg { position: absolute; left: 22px; top: 2px; width: 14px; height: 14px; }
.tree.data li svg { width: 12px; }
.files { height: 267px; flex: none; }
.hbar { height: 10px; flex: none; background: #fff; padding: 1px; }
.hbar span { display: block; height: 8px; border-radius: 4px; background: #e3e3e5; }
.thumb-files { width: 153px; }
.thumb-data { width: 178px; }
.splitter-row { height: 10px; flex: none; display: flex; justify-content: space-between; align-items: center; padding: 0 15px; background: #e8e8e9; color: #999; font-size: 10px; line-height: 8px; }
.splitter-row i { border: 5px solid transparent; }
.splitter-row .up { border-top: 0; border-bottom-color: #a3a4a7; }
.splitter-row .down { border-bottom: 0; border-top-color: #a3a4a7; }
.tabs { display: flex; flex: none; height: 25px; }
.tabs button { flex: 1; background: #dadbdf; padding-bottom: 2px; }
.tabs .on { background: #efeff1; }
.left-tabs { margin-right: 1px; }
.data-area { flex: 1; min-height: 0; display: flex; padding-top: 5px; }
.tree.data { flex: 1; }
.vbar { width: 10px; background: #fff; padding: 1px; }
.vbar span { display: block; height: 138px; border-radius: 4px; background: #e3e3e5; }
.data-hbar { margin: 0 10px 30px 0; }
.gutter { width: 10px; flex: none; background: #e8e8e9; display: flex; flex-direction: column; align-items: center; }
.gutter i { border: 5px solid transparent; border-right-color: #a3a4a7; border-left: 0; margin-top: 12px; }
.gutter b { margin-top: 456px; color: #999; font-size: 10px; line-height: 20px; }

/* centre */
.main { flex: 1; min-width: 0; display: flex; flex-direction: column; }
.top { display: flex; flex: none; }
.preview { width: 52px; flex: none; flex-direction: column; gap: 6px; margin-right: 8px; padding-right: 1px; box-shadow: 1px 0 #dcdde0; padding-bottom: 2px; }
.dim { opacity: .5; }
.top-rows { flex: 1; }
.iconbar { height: 25px; display: flex; align-items: center; gap: 11px; padding-left: 3px; }
.iconbar .sep { margin: 0 -2px; }
.badge { width: 14px; height: 14px; border-radius: 7px; background: #f9330f; color: #fff; font-size: 8px; line-height: 14px; }
.theme { gap: 3px; }
.filetabs { height: 28px; display: flex; background: #e0e0e2; }
.new-tab { width: 27px; background: #d8d9dc; border-right: 1px solid #cbccd0; }
.file-tab { width: 240px; display: flex; align-items: center; gap: 6px; padding: 0 7px 0 5px; background: #f5f5f7; border-right: 1px solid #cbccd0; color: #333; }
.file-tab button { margin-left: auto; }
.list-tabs { margin: 0 11px 0 auto; }
.formatbar { flex: none; height: 26px; display: flex; align-items: center; padding-left: 4px; }
.formatbar .sep { margin: 0 3px; }
.font { width: 145px; flex: none; margin-right: 4px; }
.size { width: 55px; flex: none; margin-right: 2px; }
.fmt { width: 22px; height: 20px; flex: none; margin: 0 2px; color: #333; }
.fmt.sel { background: #3f9bf7; border: 1px solid #9fc8f2; margin: 0; }
.fmt.al { margin-right: 0; }
.fmt.ar { margin-left: 0; }
.fmt.drop { width: 35px; gap: 6px; padding-left: 1px; justify-content: flex-start; }
.fmt.tight { width: 27px; gap: 4px; margin: 0 2px; }
.b, .i, .u, .ab { font: bold 13px/16px "Open Sans", sans-serif; }
.i { font-style: italic; font-family: "Liberation Serif", serif; }
.u { text-decoration: underline; }
.fx { font: bold 13px/16px "Liberation Serif", serif; }
.color-a { font: bold 15px/13px "Open Sans", sans-serif; width: 16px; border-bottom: 3px solid #000; }

.combo { position: relative; display: block; flex: 1; height: 20px; }
.combo.font, .combo.size { flex: none; }
.combo select, .field { appearance: none; width: 100%; height: 20px; border: 1px solid #d5d6da; border-radius: 0; background: #fff; padding: 0 20px 0 6px; line-height: 16px; }
.combo i { position: absolute; right: 0; top: 0; width: 20px; height: 20px; background: #dadbdf; display: flex; align-items: center; justify-content: center; pointer-events: none; }
.combo i svg { width: 10px; height: 6px; }
.combo.font select, .near select, .combo.size select { padding-left: 3px; }

/* parameter pane */
.param { flex: none; height: 97px; display: flex; padding-left: 12px; background: #a9a9aa; }
.v-ruler {
  width: 18px; flex: none; margin-top: 16px; border-top: 1px solid #777; border-right: 1px solid #999;
  background: linear-gradient(#999 1px, transparent 1px) right 0 top 9px / 5px 10px repeat-y,
    linear-gradient(#999 1px, transparent 1px) right 0 top 49px / 12px 50px repeat-y, #b1b1b1;
}
.v-ruler span { writing-mode: vertical-rl; font: 12px/14px "Open Sans", sans-serif; color: #444; }
.param-main { flex: 1; min-width: 0; display: flex; flex-direction: column; }
.h-ruler {
  height: 17px; flex: none; display: flex; overflow: hidden; border-bottom: 2px solid #8e8e8e;
  background: linear-gradient(90deg, #949494 1px, transparent 1px) 0 100% / 10px 5px repeat-x,
    linear-gradient(90deg, #949494 1px, transparent 1px) 0 100% / 50px 10px repeat-x,
    linear-gradient(90deg, #949494 1px, transparent 1px) 0 0 / 100px 16px repeat-x, #b1b1b1;
}
.h-ruler span { width: 100px; flex: none; padding-left: 2px; font: 12px/17px "Open Sans", sans-serif; color: #444; }
.canvas { flex: 1; display: flex; background: #b1b1b1; }
.board { position: relative; width: 961px; background: #abacae; display: flex; align-items: flex-start; padding: 25px 0 0 50px; }
.handle { width: 9px; background: #6f9fac; }
.w-label, .w-input { height: 21px; border: 1px solid #929292; text-align: center; line-height: 19px; background: none; }
.w-label { width: 80px; }
.w-input { width: 59px; padding: 0; background: #b0b0b1 linear-gradient(#0d3f6f, #0d3f6f) 2px 3px / 3px 13px no-repeat; }
.w-drop { width: 21px; height: 21px; border: 1px solid #666; border-radius: 2px; background: #bdbdbd; }
.w-query { width: 80px; height: 21px; margin-left: 350px; border: 1px solid #666; background: linear-gradient(#adadad, #989898); }
.eye { position: absolute; left: 626px; top: 15px; }
.pencil { position: absolute; left: 677px; top: 15px; }

/* sheet */
.sheet { flex: 1; min-height: 0; display: flex; border-top: 10px solid #dadadc; }
.grid { flex: 1; min-width: 0; overflow: hidden; background: #fff; }
table { table-layout: fixed; width: 1538px; border-collapse: separate; border-spacing: 0; }
.c0 { width: 25px; } .cA { width: 152px; } .cB { width: 246px; } .cC { width: 410px; } .cD { width: 177px; } .cE { width: 176px; }
th { font-weight: normal; font-size: 12px; line-height: 14px; padding: 0; background: #e8e8e8; border: 0 solid #d3d3d8; }
thead tr { height: 20px; }
thead th { border-right-width: 1px; }
thead .ln { border-bottom: 1px solid #000; }
thead .corner { background: #f5f5f7; }
.corner svg { margin: auto; }
tbody th { border-bottom-width: 1px; border-right: 1px solid #000; }
thead .cur, tbody .cur { background: #cfeffb; }
td { padding: 0 0 0 4px; border: 0 solid #000; border-width: 0 1px 1px 0; font-size: 17px; line-height: 20px; white-space: pre; overflow: hidden; font-weight: 300; }
.r22 { height: 22px; } .r23 { height: 23px; } .r33 { height: 33px; } .r44 { height: 44px; } .r45 { height: 45px; } .r51 { height: 51px; }
td.unit { vertical-align: top; padding: 476px 0 0; text-align: center; }
td.first { vertical-align: top; padding-top: 16px; }
td.name { color: #333; }
td.ref { padding-left: 2px; }
td.fm { font-size: 18px; }
td.mid { text-align: center; padding: 0; }
td.gray { background: #c0c0c0; }
td.two { padding: 0; text-align: center; }
td.two div { height: 32px; overflow: hidden; padding-top: 3px; }
td.marked { position: relative; overflow: visible; }
td.marked::after { content: ""; position: absolute; inset: -3px -4px -4px -4px; border: 3px solid #fb2112; border-radius: 3px; z-index: 3; }
td.ds {
  position: relative; padding: 0; text-align: center;
  background: linear-gradient(135deg, #e6002d 4px, transparent 4px), linear-gradient(225deg, #a80fd6 4px, transparent 4px), linear-gradient(45deg, #f9b90c 5px, transparent 5px);
}
td.cut { padding-left: 4px; text-align: left; }
td.active { overflow: visible; }
td.active::after { content: ""; position: absolute; inset: -2px -2px -2px -1px; border: 3px solid #3a86ee; z-index: 2; }
.sheet-v { width: 17px; flex: none; display: flex; flex-direction: column; background: #f5f5f7; }
.sheet-v button { height: 16px; background: #fff; }
.sheet-v span { height: 243px; margin: 99px 0 auto; background: #e2e2e3; }
.flip { transform: rotate(180deg); }
.sheet-h { height: 17px; flex: none; display: flex; }
.sheet-h button { width: 17px; background: #fff; }
.sheet-h span { width: 508px; margin-right: auto; background: #e1e1e2; }
.sheettabs { height: 20px; flex: none; display: flex; align-items: center; }
.sheettabs > button { height: 20px; padding: 0 11px 2px 8px; background: #d9dadd; border: 1px solid #b5b6ba; border-left-width: 0; color: #555; }
.sheettabs > button svg { width: 9px; height: 9px; margin-right: 3px; }
.sheettabs > button.on { background: #fff; border-color: #fff; }
.foot-tools { display: flex; gap: 8px; margin-left: auto; }
.pager { display: flex; gap: 19px; margin: 0 18px 0 22px; }
.zoomer { display: flex; align-items: center; gap: 8px; }
.zoomer input { appearance: none; width: 219px; height: 14px; background: linear-gradient(#d0d1d4, #d0d1d4) 0 50% / 100% 1px no-repeat; }
.zoomer input::-webkit-slider-thumb { appearance: none; width: 4px; height: 12px; border-radius: 1px; background: #333; }
.pct { width: 33px; height: 20px; margin-left: 8px; padding: 0 4px 2px; border: 1px solid #d0d1d4; background: #fff; font: 13px/16px "Liberation Sans", sans-serif; }
.pct-sign { width: 16px; text-align: center; }

/* right column */
.strip { width: 40px; flex: none; display: flex; flex-direction: column; align-items: center; gap: 4px; background: #e8e8e9; }
.strip .fold { border: 5px solid transparent; border-left-color: #a3a4a7; border-right: 0; margin: 12px 0 3px; }
.strip button { width: 32px; height: 28px; }
.strip .on { background: #f5f5f7; }
.right { position: relative; width: 246px; flex: none; }
h2 { display: flex; align-items: center; justify-content: space-between; height: 27px; margin: 0; padding: 0 6px 0 10px; border-bottom: 1px solid #d5d6d9; font-weight: normal; font-size: 12px; }
.form { display: flex; flex-direction: column; gap: 10px; padding: 10px 10px 0; }
.row { display: flex; align-items: center; }
.row.close { margin-bottom: -6px; }
.form > .combo { flex: none; }
.l56 { width: 56px; } .l44 { width: 44px; } .l68 { width: 68px; }
.field { flex: 1; min-width: 0; padding: 0 3px; }
#cell { font: 13px/16px "Liberation Sans", sans-serif; }
fieldset { margin: -8px 2px 0; height: 38px; padding: 0; border: 1px solid #9a9b9e; border-radius: 3px; color: #999; text-align: center; line-height: 12px; }
legend { margin: 0 auto 0 3px; padding: 0 2px; line-height: 18px; }
.right .tabs { margin: 15px 1px 0 0; }
.attrs { padding-right: 12px; }
.lead { position: absolute; left: 3px; top: 3px; width: 12px; height: 14px; }
.with-icon select { padding-left: 19px; }
.help { position: absolute; right: 46px; bottom: 46px; width: 36px; height: 36px; border-radius: 18px; background: #3f9bf7; color: #fff; font: 24px/36px "Noto Sans", sans-serif; }
.help i { position: absolute; right: 2px; top: 0; width: 9px; height: 9px; border-radius: 5px; background: #ee1c25; }
.desktop-edge { height: 9px; flex: none; border-top: 1px solid #a7bcbb; background: linear-gradient(90deg, #d9f0e2, #c9f1f2 15%, #cdf3f3 60%, #c9eef0); }
```
